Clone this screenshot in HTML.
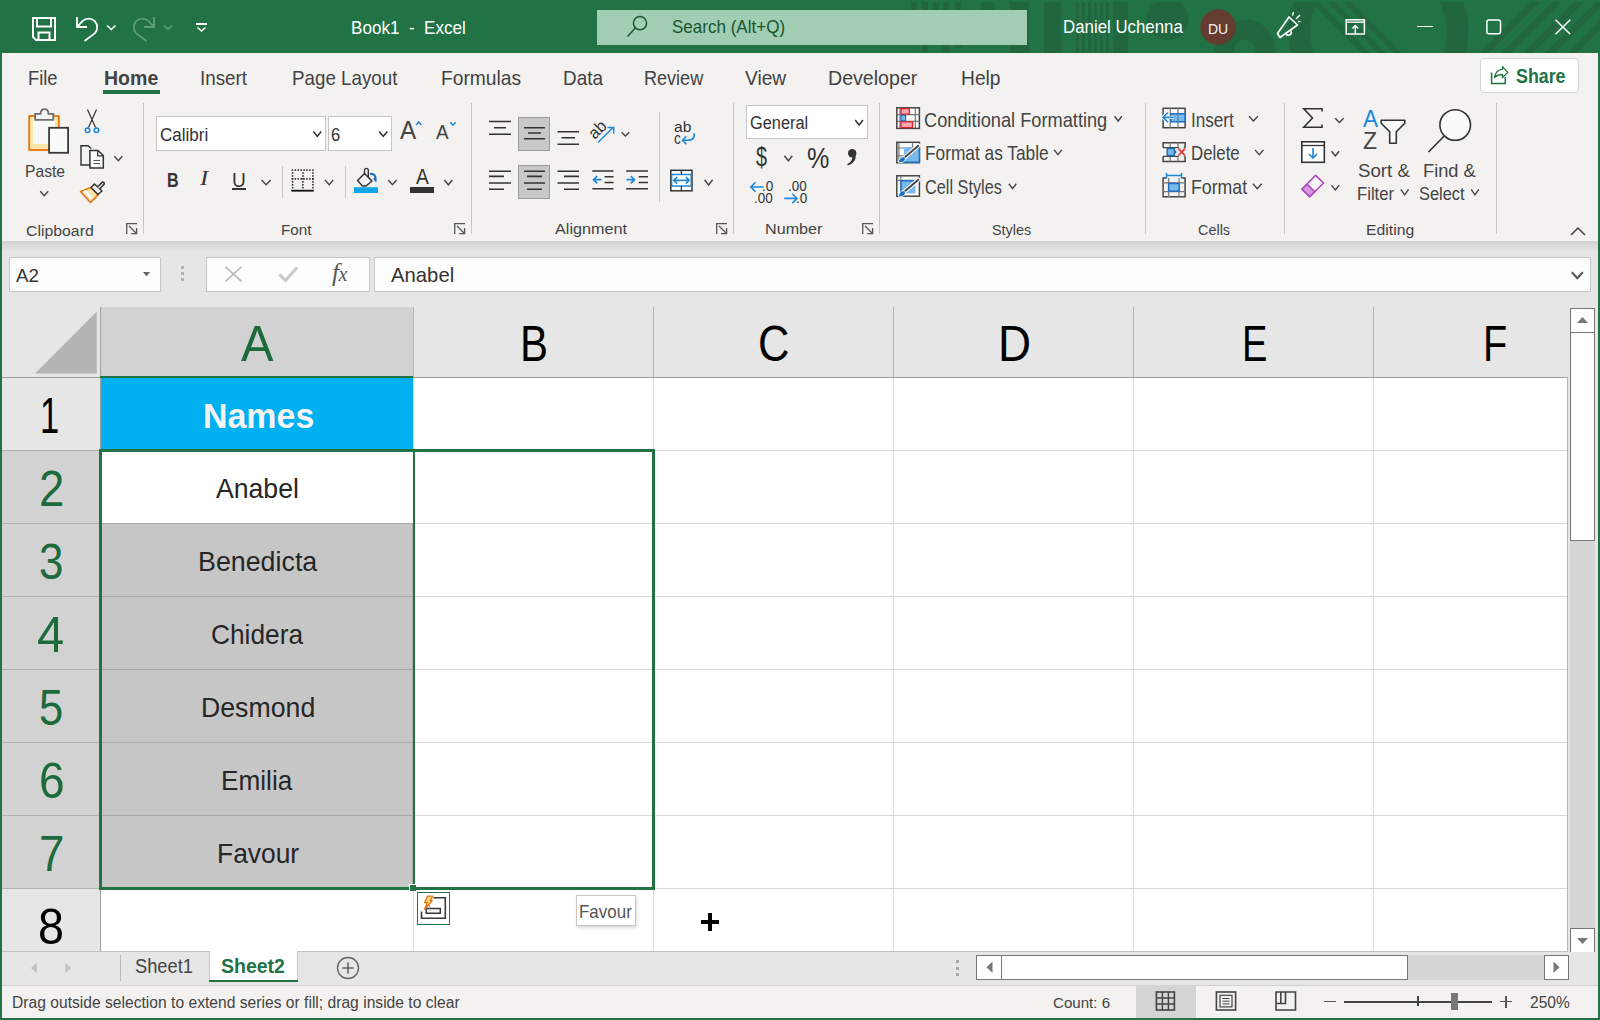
<!DOCTYPE html>
<html><head><meta charset="utf-8">
<style>
*{margin:0;padding:0;box-sizing:border-box}
html,body{width:1600px;height:1020px;overflow:hidden;background:#217346;font-family:"Liberation Sans",sans-serif;position:relative}
.a{position:absolute;overflow:visible}
.t{position:absolute;white-space:pre;line-height:1;transform-origin:0 0}
</style></head><body>
<div class="a" style="left:0px;top:0px;width:1600px;height:53px;background:#217346;"></div>
<div class="a" style="left:2px;top:53px;width:1596px;height:188px;background:#f3f2f1;"></div>
<div class="a" style="left:2px;top:241px;width:1596px;height:10px;background:linear-gradient(#d2d2d2,#e6e6e6);"></div>
<div class="a" style="left:2px;top:251px;width:1596px;height:56px;background:#e6e6e6;"></div>
<div class="a" style="left:2px;top:307px;width:1596px;height:644px;background:#e6e6e6;"></div>
<div class="a" style="left:2px;top:951px;width:1596px;height:34px;background:#e6e6e6;"></div>
<div class="a" style="left:2px;top:985px;width:1596px;height:33px;background:#f3f2f1;border-top:1px solid #d0d0d0"></div>
<svg class="a" style="left:0;top:0;overflow:hidden" width="1600" height="53"><rect x="911" y="2" width="6" height="8" fill="#22663f"/><rect x="922" y="2" width="6" height="50" fill="#22663f"/><rect x="933" y="2" width="6" height="8" fill="#22663f"/><rect x="943" y="2" width="6" height="50" fill="#22663f"/><rect x="955" y="2" width="6" height="46" fill="#22663f"/><rect x="981" y="2" width="13" height="8" fill="#22663f"/><rect x="1010" y="2" width="19" height="51" fill="#22663f"/><rect x="1044" y="2" width="17" height="51" fill="#22663f"/><rect x="1113" y="2" width="15" height="51" fill="#22663f"/><rect x="1076" y="2" width="3" height="51" fill="#22663f"/><rect x="1082" y="2" width="3" height="51" fill="#22663f"/><rect x="1088" y="2" width="3" height="51" fill="#22663f"/><rect x="1094" y="2" width="3" height="51" fill="#22663f"/><rect x="1100" y="2" width="3" height="51" fill="#22663f"/><rect x="1106" y="2" width="3" height="51" fill="#22663f"/><circle cx="1167.5" cy="19" r="21" fill="#22663f"/><circle cx="1245" cy="50" r="20.5" fill="none" stroke="#22663f" stroke-width="20"/><circle cx="1378.5" cy="32" r="79" fill="none" stroke="#22663f" stroke-width="22"/><path d="M1311 2 L1319 2 L1370 53 L1362 53 Z" fill="#22663f"/><path d="M1327 2 L1335 2 L1386 53 L1378 53 Z" fill="#22663f"/><path d="M1343 2 L1351 2 L1402 53 L1394 53 Z" fill="#22663f"/><path d="M1530 2 L1540 2 L1489 53 L1479 53 Z" fill="#22663f"/><path d="M1552 2 L1562 2 L1511 53 L1501 53 Z" fill="#22663f"/><path d="M1574 2 L1584 2 L1533 53 L1523 53 Z" fill="#22663f"/><path d="M1596 2 L1606 2 L1555 53 L1545 53 Z" fill="#22663f"/><path d="M1618 2 L1628 2 L1577 53 L1567 53 Z" fill="#22663f"/></svg>
<div class="a" style="left:0px;top:0px;width:1600px;height:2px;background:#217346;"></div>
<svg class="a" style="left:30px;top:15px;" width="30" height="30" viewBox="30 15 30 30"><path d="M33 18 H55 V40 H36 L33 37 Z M37 18 V26.5 H51 V18 M38.5 40 V32.5 H49.5 V40" fill="none" stroke="#fff" stroke-width="2"/></svg>
<svg class="a" style="left:72px;top:14px;" width="30" height="30" viewBox="72 14 30 30"><path d="M77 17 V27 H87" fill="none" stroke="#fff" stroke-width="1.8"/><path d="M77.8 26.2 L82.5 21.2 A8.6 8.6 0 0 1 94.7 33.4 L84.5 41" fill="none" stroke="#fff" stroke-width="1.8"/></svg>
<svg class="a" style="left:105px;top:23px;" width="13" height="9" viewBox="105 23 13 9"><path d="M107 25.5 L111.25 29.5 L115.5 25.5" fill="none" stroke="#fff" stroke-width="1.6"/></svg>
<svg class="a" style="left:128px;top:14px;" width="30" height="30" viewBox="128 14 30 30"><path d="M154 17 V27 H144" fill="none" stroke="#5f9e78" stroke-width="1.8"/><path d="M153.2 26.2 L148.5 21.2 A8.6 8.6 0 0 0 136.3 33.4 L146.5 41" fill="none" stroke="#5f9e78" stroke-width="1.8"/></svg>
<svg class="a" style="left:162px;top:23px;" width="13" height="9" viewBox="162 23 13 9"><path d="M164 25.5 L168.0 29.5 L172 25.5" fill="none" stroke="#5f9e78" stroke-width="1.5"/></svg>
<div class="a" style="left:196px;top:23px;width:11px;height:2px;background:#fff;"></div>
<svg class="a" style="left:195px;top:25px;" width="13" height="8" viewBox="195 25 13 8"><path d="M197.5 27.5 L201.5 31 L205.5 27.5" fill="none" stroke="#fff" stroke-width="1.6"/></svg>
<div class="t" style="left:351.00px;top:18.66px;font-size:18.72px;color:#fff;transform:scaleX(0.9134);">Book1  -  Excel</div>
<div class="a" style="left:597px;top:10px;width:430px;height:35px;background:#a0cdb4;"></div>
<svg class="a" style="left:622px;top:12px;" width="30" height="30" viewBox="622 12 30 30"><circle cx="640" cy="23.2" r="6.6" fill="none" stroke="#1a5a35" stroke-width="1.5"/><path d="M635.3 28 L627.5 36.5" stroke="#1a5a35" stroke-width="1.6"/></svg>
<div class="t" style="left:671.50px;top:19.47px;font-size:17.46px;color:#17562f;transform:scaleX(0.9763);">Search (Alt+Q)</div>
<div class="t" style="left:1063.00px;top:19.12px;font-size:17.88px;color:#fff;transform:scaleX(0.9430);">Daniel Uchenna</div>
<svg class="a" style="left:1198px;top:7px;" width="40" height="40" viewBox="1198 7 40 40"><circle cx="1218" cy="27" r="17.8" fill="#643c30"/></svg>
<div class="t" style="left:1207.75px;top:20.50px;font-size:15.36px;color:#f2f2f2;transform:scaleX(0.9101);">DU</div>
<svg class="a" style="left:1272px;top:12px;" width="32" height="32" viewBox="1272 12 32 32"><path d="M1277.5 33.5 L1289 17 L1297.5 25 L1280 37.5 Z" fill="none" stroke="#fff" stroke-width="1.7" stroke-linejoin="round"/><path d="M1285.5 33.5 A3 3 0 0 0 1291 31" fill="none" stroke="#fff" stroke-width="1.6"/><path d="M1292.5 15.5 L1293.5 12 M1296 19 L1300 15 M1298 21.5 L1300.5 21.5" stroke="#fff" stroke-width="1.5"/></svg>
<svg class="a" style="left:1340px;top:14px;" width="30" height="26" viewBox="1340 14 30 26"><rect x="1346.2" y="19.8" width="18.2" height="14.2" fill="none" stroke="#fff" stroke-width="1.5"/><path d="M1346 22.2 H1364.6" stroke="#fff" stroke-width="1.4"/><path d="M1355.3 34 V25.5 M1352.3 28.5 L1355.3 25.5 L1358.3 28.5" fill="none" stroke="#fff" stroke-width="1.5"/></svg>
<div class="a" style="left:1417px;top:25.5px;width:16px;height:1.6px;background:#fff;"></div>
<svg class="a" style="left:1482px;top:15px;" width="24" height="24" viewBox="1482 15 24 24"><rect x="1486.9" y="20" width="13.6" height="13.8" rx="2" fill="none" stroke="#fff" stroke-width="1.5"/></svg>
<svg class="a" style="left:1551px;top:15px;" width="24" height="24" viewBox="1551 15 24 24"><path d="M1555.5 19.8 L1570.3 34.2 M1570.3 19.8 L1555.5 34.2" stroke="#fff" stroke-width="1.5"/></svg>
<div class="t" style="left:27.50px;top:67.61px;font-size:20.25px;color:#424242;transform:scaleX(0.9042);">File</div>
<div class="t" style="left:200.00px;top:67.61px;font-size:20.25px;color:#424242;transform:scaleX(0.9284);">Insert</div>
<div class="t" style="left:292.00px;top:67.61px;font-size:20.25px;color:#424242;transform:scaleX(0.9275);">Page Layout</div>
<div class="t" style="left:441.25px;top:67.61px;font-size:20.25px;color:#424242;transform:scaleX(0.9481);">Formulas</div>
<div class="t" style="left:562.50px;top:67.61px;font-size:20.25px;color:#424242;transform:scaleX(0.9329);">Data</div>
<div class="t" style="left:643.75px;top:67.61px;font-size:20.25px;color:#424242;transform:scaleX(0.8910);">Review</div>
<div class="t" style="left:745.00px;top:67.61px;font-size:20.25px;color:#424242;transform:scaleX(0.9456);">View</div>
<div class="t" style="left:828.25px;top:67.61px;font-size:20.25px;color:#424242;transform:scaleX(0.9675);">Developer</div>
<div class="t" style="left:960.50px;top:67.61px;font-size:20.25px;color:#424242;transform:scaleX(0.9489);">Help</div>
<div class="t" style="left:103.75px;top:67.61px;font-size:20.25px;color:#424242;font-weight:bold;transform:scaleX(0.9644);">Home</div>
<div class="a" style="left:103px;top:90px;width:57px;height:4px;background:#217346;"></div>
<div class="a" style="left:1480px;top:57.5px;width:99px;height:35px;background:#fff;border:1px solid #d4d4d4;border-radius:4px"></div>
<svg class="a" style="left:1488px;top:62px;" width="24" height="26" viewBox="1488 62 24 26"><path d="M1491.6 72.5 V83.4 H1505.3 V77" fill="none" stroke="#217346" stroke-width="1.5"/><path d="M1494.4 77.6 C1495.5 72 1498 69.5 1502.5 69.3 V66.6 L1507.8 72.4 L1502.5 77.5 V74.5 C1499 74.5 1496.5 75.5 1494.4 77.6 Z" fill="none" stroke="#217346" stroke-width="1.3" stroke-linejoin="round"/></svg>
<div class="t" style="left:1515.50px;top:66.36px;font-size:20.25px;color:#217346;font-weight:bold;transform:scaleX(0.8800);">Share</div>
<div class="a" style="left:143px;top:103px;width:1px;height:131px;background:#c8c6c4;"></div>
<div class="a" style="left:471px;top:103px;width:1px;height:131px;background:#c8c6c4;"></div>
<div class="a" style="left:733px;top:103px;width:1px;height:131px;background:#c8c6c4;"></div>
<div class="a" style="left:879px;top:103px;width:1px;height:131px;background:#c8c6c4;"></div>
<div class="a" style="left:1145px;top:103px;width:1px;height:131px;background:#c8c6c4;"></div>
<div class="a" style="left:1284px;top:103px;width:1px;height:131px;background:#c8c6c4;"></div>
<div class="a" style="left:1496px;top:103px;width:1px;height:131px;background:#c8c6c4;"></div>
<div class="t" style="left:26.40px;top:222.73px;font-size:15.08px;color:#444;transform:scaleX(1.0490);">Clipboard</div>
<div class="t" style="left:280.70px;top:222.85px;font-size:14.94px;color:#444;transform:scaleX(1.0185);">Font</div>
<div class="t" style="left:554.50px;top:222.45px;font-size:14.94px;color:#444;transform:scaleX(1.0843);">Alignment</div>
<div class="t" style="left:765.30px;top:222.45px;font-size:14.94px;color:#444;transform:scaleX(1.0818);">Number</div>
<div class="t" style="left:992.30px;top:222.85px;font-size:14.94px;color:#444;transform:scaleX(0.9654);">Styles</div>
<div class="t" style="left:1198.40px;top:222.85px;font-size:14.94px;color:#444;transform:scaleX(0.9660);">Cells</div>
<div class="t" style="left:1366.00px;top:222.85px;font-size:14.94px;color:#444;transform:scaleX(1.0549);">Editing</div>
<svg class="a" style="left:125px;top:222px;" width="15" height="15" viewBox="125 222 15 15"><path d="M126.7 234 V223.7 H137" fill="none" stroke="#555" stroke-width="1.3"/><path d="M129 226 L136.5 233.5 M131 233.6 H136.6 V228" fill="none" stroke="#555" stroke-width="1.3"/></svg>
<svg class="a" style="left:453px;top:222px;" width="15" height="15" viewBox="453 222 15 15"><path d="M454.7 234 V223.7 H465" fill="none" stroke="#555" stroke-width="1.3"/><path d="M457 226 L464.5 233.5 M459 233.6 H464.6 V228" fill="none" stroke="#555" stroke-width="1.3"/></svg>
<svg class="a" style="left:715px;top:222px;" width="15" height="15" viewBox="715 222 15 15"><path d="M716.7 234 V223.7 H727" fill="none" stroke="#555" stroke-width="1.3"/><path d="M719 226 L726.5 233.5 M721 233.6 H726.6 V228" fill="none" stroke="#555" stroke-width="1.3"/></svg>
<svg class="a" style="left:861px;top:222px;" width="15" height="15" viewBox="861 222 15 15"><path d="M862.7 234 V223.7 H873" fill="none" stroke="#555" stroke-width="1.3"/><path d="M865 226 L872.5 233.5 M867 233.6 H872.6 V228" fill="none" stroke="#555" stroke-width="1.3"/></svg>
<svg class="a" style="left:1568px;top:224px;" width="20" height="14" viewBox="1568 224 20 14"><path d="M1571 235 L1578 228 L1585 235" fill="none" stroke="#444" stroke-width="1.5"/></svg>
<svg class="a" style="left:24px;top:105px;" width="50" height="52" viewBox="24 105 50 52"><rect x="29.2" y="116" width="29.6" height="34" fill="#fce6ac" stroke="#e47a12" stroke-width="1.9"/><rect x="33" y="119" width="22" height="25" fill="#f8f8f8"/><path d="M35.2 119.8 V113.8 H40.5 C41 107.6 48 107.6 48.5 113.8 H53.2 V119.8 Z" fill="#f4f4f4" stroke="#6e6e6e" stroke-width="1.8"/><rect x="49.1" y="127.8" width="19" height="25" fill="#fafafa" stroke="#3a3a3a" stroke-width="1.8"/></svg>
<div class="t" style="left:25.20px;top:162.64px;font-size:17.32px;color:#444;transform:scaleX(0.9042);">Paste</div>
<svg class="a" style="left:38px;top:189px;" width="13" height="9" viewBox="38 189 13 9"><path d="M40.2 191.2 L44.2 195.8 L48.2 191.2" fill="none" stroke="#444" stroke-width="1.4"/></svg>
<svg class="a" style="left:80px;top:106px;" width="24" height="30" viewBox="80 106 24 30"><path d="M88.5 127.5 L96.5 109.5 M95.5 127.5 L87.5 109.5" stroke="#333" stroke-width="1.2"/><circle cx="87.5" cy="130.3" r="2.3" fill="none" stroke="#1e87d6" stroke-width="1.5"/><circle cx="96.5" cy="130.3" r="2.3" fill="none" stroke="#1e87d6" stroke-width="1.5"/></svg>
<svg class="a" style="left:78px;top:143px;" width="30" height="30" viewBox="78 143 30 30"><path d="M90 165 H81 V145.8 H88 L91.2 148.5" fill="none" stroke="#333" stroke-width="1.4"/><path d="M89.9 168 V150.5 H98 L103.3 155.5 V168 Z" fill="#fafafa" stroke="#333" stroke-width="1.5"/><path d="M97.7 150.5 V155.8 H103" fill="none" stroke="#333" stroke-width="1.3"/><path d="M93.5 160.5 H100 M93.5 163.5 H100" stroke="#555" stroke-width="1"/></svg>
<svg class="a" style="left:112px;top:154px;" width="12" height="9" viewBox="112 154 12 9"><path d="M114.4 156.3 L118.35 160.8 L122.3 156.3" fill="none" stroke="#444" stroke-width="1.4"/></svg>
<svg class="a" style="left:78px;top:179px;" width="30" height="28" viewBox="78 179 30 28"><path d="M80.5 191.5 C85 190 88 188 91 187.5 L98 194.5 C96 197.5 93 200 90.5 202.5 Z" fill="#fde3a7" stroke="#e07612" stroke-width="1.6" stroke-linejoin="round"/><path d="M84 191 C88 194 91 197 91 199" fill="none" stroke="#f8f8f8" stroke-width="3"/><path d="M91 187.5 L94.5 184 L102 191 L98 194.5 Z" fill="#f0f0f0" stroke="#333" stroke-width="1.5" stroke-linejoin="round"/><path d="M97.5 187 L102.5 182 A1.6 1.6 0 0 1 104.2 184 L99.5 189" fill="#f0f0f0" stroke="#333" stroke-width="1.5"/></svg>
<div class="a" style="left:156px;top:116px;width:170px;height:35px;background:#fff;border:1px solid #c6c6c6"></div>
<div class="t" style="left:159.50px;top:125.69px;font-size:18.44px;color:#333;transform:scaleX(0.9228);">Calibri</div>
<svg class="a" style="left:311px;top:129px;" width="12" height="9" viewBox="311 129 12 9"><path d="M313.4 131.6 L317.29999999999995 136.3 L321.2 131.6" fill="none" stroke="#333" stroke-width="1.5"/></svg>
<div class="a" style="left:328px;top:116px;width:64px;height:35px;background:#fff;border:1px solid #c6c6c6"></div>
<div class="t" style="left:331.20px;top:125.69px;font-size:18.44px;color:#333;transform:scaleX(0.8976);">6</div>
<svg class="a" style="left:377px;top:129px;" width="13" height="9" viewBox="377 129 13 9"><path d="M379.2 131.6 L383.29999999999995 136.3 L387.4 131.6" fill="none" stroke="#333" stroke-width="1.5"/></svg>
<div class="t" style="left:399.70px;top:117.34px;font-size:26.54px;color:#444;transform:scaleX(0.9135);">A</div>
<svg class="a" style="left:414px;top:118px;" width="10" height="10" viewBox="414 118 10 10"><path d="M416.2 125 L418.8 122 L421.4 125" fill="none" stroke="#1e87d6" stroke-width="1.5"/></svg>
<div class="t" style="left:436.00px;top:122.89px;font-size:19.97px;color:#444;transform:scaleX(0.9495);">A</div>
<svg class="a" style="left:448px;top:118px;" width="10" height="10" viewBox="448 118 10 10"><path d="M450.3 122.2 L453 125.2 L455.7 122.2" fill="none" stroke="#1e87d6" stroke-width="1.5"/></svg>
<div class="t" style="left:166.60px;top:170.06px;font-size:20.25px;color:#333;font-weight:bold;transform:scaleX(0.7932);">B</div>
<div class="t" style="left:200px;top:168px;font-family:'Liberation Serif',serif;font-style:italic;font-size:21.5px;color:#333;transform:scaleX(1.15)">I</div>
<div class="t" style="left:232.00px;top:170.06px;font-size:20.25px;color:#333;transform:scaleX(0.9436);">U</div>
<div class="a" style="left:232px;top:188.2px;width:14px;height:1.8px;background:#333;"></div>
<svg class="a" style="left:259px;top:178px;" width="14" height="9" viewBox="259 178 14 9"><path d="M261.6 180 L266.1 184.8 L270.6 180" fill="none" stroke="#444" stroke-width="1.4"/></svg>
<div class="a" style="left:282px;top:166px;width:1px;height:32px;background:#c8c6c4;"></div>
<svg class="a" style="left:289px;top:166px;" width="28" height="28" viewBox="289 166 28 28"><rect x="291.60" y="169.3" width="1.6" height="1.6" fill="#333"/><rect x="291.60" y="178.1" width="1.6" height="1.6" fill="#333"/><rect x="294.53" y="169.3" width="1.6" height="1.6" fill="#333"/><rect x="294.53" y="178.1" width="1.6" height="1.6" fill="#333"/><rect x="297.46" y="169.3" width="1.6" height="1.6" fill="#333"/><rect x="297.46" y="178.1" width="1.6" height="1.6" fill="#333"/><rect x="300.39" y="169.3" width="1.6" height="1.6" fill="#333"/><rect x="300.39" y="178.1" width="1.6" height="1.6" fill="#333"/><rect x="303.32" y="169.3" width="1.6" height="1.6" fill="#333"/><rect x="303.32" y="178.1" width="1.6" height="1.6" fill="#333"/><rect x="306.25" y="169.3" width="1.6" height="1.6" fill="#333"/><rect x="306.25" y="178.1" width="1.6" height="1.6" fill="#333"/><rect x="309.18" y="169.3" width="1.6" height="1.6" fill="#333"/><rect x="309.18" y="178.1" width="1.6" height="1.6" fill="#333"/><rect x="312.11" y="169.3" width="1.6" height="1.6" fill="#333"/><rect x="312.11" y="178.1" width="1.6" height="1.6" fill="#333"/><rect x="291.8" y="172.23" width="1.6" height="1.6" fill="#333"/><rect x="312.1" y="172.23" width="1.6" height="1.6" fill="#333"/><rect x="302.1" y="172.23" width="1.6" height="1.6" fill="#333"/><rect x="291.8" y="175.16" width="1.6" height="1.6" fill="#333"/><rect x="312.1" y="175.16" width="1.6" height="1.6" fill="#333"/><rect x="302.1" y="175.16" width="1.6" height="1.6" fill="#333"/><rect x="291.8" y="178.09" width="1.6" height="1.6" fill="#333"/><rect x="312.1" y="178.09" width="1.6" height="1.6" fill="#333"/><rect x="302.1" y="178.09" width="1.6" height="1.6" fill="#333"/><rect x="291.8" y="181.02" width="1.6" height="1.6" fill="#333"/><rect x="312.1" y="181.02" width="1.6" height="1.6" fill="#333"/><rect x="302.1" y="181.02" width="1.6" height="1.6" fill="#333"/><rect x="291.8" y="183.95" width="1.6" height="1.6" fill="#333"/><rect x="312.1" y="183.95" width="1.6" height="1.6" fill="#333"/><rect x="302.1" y="183.95" width="1.6" height="1.6" fill="#333"/><rect x="291.8" y="186.88" width="1.6" height="1.6" fill="#333"/><rect x="312.1" y="186.88" width="1.6" height="1.6" fill="#333"/><rect x="302.1" y="186.88" width="1.6" height="1.6" fill="#333"/><rect x="312.3" y="178.1" width="1.6" height="1.6" fill="#333"/><rect x="291.3" y="189.8" width="22.5" height="1.8" fill="#111"/></svg>
<svg class="a" style="left:323px;top:178px;" width="13" height="9" viewBox="323 178 13 9"><path d="M325 180 L329.15 184.8 L333.3 180" fill="none" stroke="#444" stroke-width="1.4"/></svg>
<div class="a" style="left:345px;top:166px;width:1px;height:32px;background:#c8c6c4;"></div>
<svg class="a" style="left:352px;top:166px;" width="30" height="30" viewBox="352 166 30 30"><path d="M357.5 180.5 L364.5 173.5 L372 181 L366 186 H362.5 Z" fill="none" stroke="#333" stroke-width="1.5" stroke-linejoin="round"/><path d="M364.5 173.5 V169.8 A2 2 0 0 1 368.3 169.8 V177" fill="none" stroke="#333" stroke-width="1.4"/><path d="M370 174 C374 173 376 176 375.5 180 L374 178" fill="none" stroke="#1b6fc2" stroke-width="2.2"/><rect x="354" y="187.2" width="24" height="5.8" fill="#12a7e8"/></svg>
<svg class="a" style="left:386px;top:178px;" width="13" height="9" viewBox="386 178 13 9"><path d="M388.3 180 L392.45000000000005 184.8 L396.6 180" fill="none" stroke="#444" stroke-width="1.4"/></svg>
<div class="t" style="left:415.80px;top:167.41px;font-size:21.37px;color:#333;transform:scaleX(0.8982);">A</div>
<div class="a" style="left:410.3px;top:187.2px;width:23.6px;height:5.8px;background:#333;"></div>
<svg class="a" style="left:442px;top:178px;" width="12" height="9" viewBox="442 178 12 9"><path d="M444.4 180 L448.35 184.8 L452.3 180" fill="none" stroke="#444" stroke-width="1.4"/></svg>
<svg class="a" style="left:480px;top:110px;" width="180" height="95" viewBox="480 110 180 95"><rect x="518.5" y="117.5" width="31" height="33" fill="#c8c8c8" stroke="#9b9b9b" stroke-width="1"/><rect x="518.5" y="165.5" width="31" height="33" fill="#c8c8c8" stroke="#9b9b9b" stroke-width="1"/><path d="M489 121.5 H511 M494 127.8 H506 M489 134.3 H511 " stroke="#333" stroke-width="1.6" fill="none"/><path d="M524 127.8 H545 M528 133 H541 M524 138.8 H545 " stroke="#333" stroke-width="1.6" fill="none"/><path d="M557.5 131.8 H579.0 M561.5 137.8 H575.0 M557.5 144.2 H579.0 " stroke="#333" stroke-width="1.6" fill="none"/><path d="M489 171.2 H511 M489 176.4 H504 M489 183 H511 M489 189.3 H504 " stroke="#333" stroke-width="1.6" fill="none"/><path d="M524 171.2 H545 M527 176.4 H542 M524 183 H545 M527 189.3 H542 " stroke="#333" stroke-width="1.6" fill="none"/><path d="M557.5 171.2 H579.0 M564.0 176.4 H579.0 M557.5 183 H579.0 M564.0 189.3 H579.0 " stroke="#333" stroke-width="1.6" fill="none"/><path d="M592.3 171 H613.5 M604.5999999999999 176.8 H613.5 M604.5999999999999 182.5 H613.5 M592.3 188.8 H613.5 " stroke="#333" stroke-width="1.6" fill="none"/><path d="M601.5 179.7 H593.5 M597.2 176 L593.5 179.7 L597.2 183.4" fill="none" stroke="#1e87d6" stroke-width="1.7"/><path d="M626.2 171 H648.0 M638.7 176.8 H648.0 M638.7 182.5 H648.0 M626.2 188.8 H648.0 " stroke="#333" stroke-width="1.6" fill="none"/><path d="M626.5 179.7 H634.5 M630.8 176 L634.5 179.7 L630.8 183.4" fill="none" stroke="#1e87d6" stroke-width="1.7"/></svg>
<div class="t" style="left:589px;top:119.5px;font-size:16.5px;color:#333;transform:rotate(-45deg);transform-origin:10px 10px">ab</div>
<div class="a" style="left:659px;top:112px;width:1px;height:90px;background:#c8c6c4;"></div>
<svg class="a" style="left:588px;top:118px;" width="40" height="30" viewBox="588 118 40 30"><path d="M598 142.5 L613.5 127 M607.5 127.5 H613.7 V133.7" fill="none" stroke="#1e87d6" stroke-width="1.5"/></svg>
<svg class="a" style="left:619px;top:130px;" width="12" height="8" viewBox="619 130 12 8"><path d="M621.6 132.2 L625.4000000000001 136 L629.2 132.2" fill="none" stroke="#444" stroke-width="1.4"/></svg>
<div class="t" style="left:673.70px;top:120.60px;font-size:13.83px;color:#333;transform:scaleX(1.1279);">ab</div>
<div class="t" style="left:673.70px;top:130.10px;font-size:16.06px;color:#333;transform:scaleX(0.8500);">c</div>
<svg class="a" style="left:678px;top:128px;" width="20" height="20" viewBox="678 128 20 20"><path d="M693.8 133.2 C695.5 137.5 692 140.3 688 140.3 H682.5 M686.3 136.3 L682.5 140.3 L686.3 144.3" fill="none" stroke="#1e87d6" stroke-width="1.6"/></svg>
<svg class="a" style="left:668px;top:167px;" width="28" height="28" viewBox="668 167 28 28"><rect x="670.8" y="170.3" width="21.2" height="20.5" fill="#fff" stroke="#333" stroke-width="1.5"/><rect x="671.6" y="174.5" width="19.6" height="11.5" fill="#fff" stroke="#1e87d6" stroke-width="1.5"/><path d="M681.4 170.3 V174.5 M681.4 186 V190.8" stroke="#333" stroke-width="1.3"/><path d="M673.8 180.3 H689.2 M677.2 177 L673.8 180.3 L677.2 183.6 M685.8 177 L689.2 180.3 L685.8 183.6" fill="none" stroke="#1e87d6" stroke-width="1.7"/></svg>
<svg class="a" style="left:702px;top:177px;" width="13" height="10" viewBox="702 177 13 10"><path d="M704.6 179.8 L708.6 185 L712.6 179.8" fill="none" stroke="#444" stroke-width="1.4"/></svg>
<div class="a" style="left:746px;top:104.5px;width:122px;height:34.5px;background:#fff;border:1px solid #c6c6c6"></div>
<div class="t" style="left:749.50px;top:114.50px;font-size:17.60px;color:#333;transform:scaleX(0.9285);">General</div>
<svg class="a" style="left:853px;top:118px;" width="12" height="10" viewBox="853 118 12 10"><path d="M855.2 120 L859.1 125 L863 120" fill="none" stroke="#333" stroke-width="1.5"/></svg>
<div class="t" style="left:755.70px;top:143.45px;font-size:27.23px;color:#333;transform:scaleX(0.7273);">$</div>
<svg class="a" style="left:782px;top:153px;" width="12" height="10" viewBox="782 153 12 10"><path d="M784.4 155.8 L788.3499999999999 160.8 L792.3 155.8" fill="none" stroke="#444" stroke-width="1.4"/></svg>
<div class="t" style="left:806.90px;top:142.92px;font-size:29.75px;color:#333;transform:scaleX(0.8455);">%</div>
<svg class="a" style="left:844px;top:146px;" width="18" height="22" viewBox="844 146 18 22"><circle cx="852.2" cy="153.3" r="4.2" fill="#333"/><path d="M855.5 155 C856.5 160 853 164 847.8 165.5 L847.3 164 C850.5 162.5 852.5 160 852.5 156.5 Z" fill="#333"/></svg>
<div class="t" style="left:761.50px;top:179.88px;font-size:13.97px;color:#333;transform:scaleX(0.9720);">.0</div>
<div class="t" style="left:754.00px;top:192.08px;font-size:13.97px;color:#333;transform:scaleX(0.9641);">.00</div>
<svg class="a" style="left:748px;top:180px;" width="17" height="14" viewBox="748 180 17 14"><path d="M763.6 187 H751 M755.5 182.3 L750.8 187 L755.5 191.7" fill="none" stroke="#1e87d6" stroke-width="1.6"/></svg>
<div class="t" style="left:788.10px;top:179.88px;font-size:13.97px;color:#333;transform:scaleX(0.9641);">.00</div>
<div class="t" style="left:795.60px;top:192.08px;font-size:13.97px;color:#333;transform:scaleX(0.9720);">.0</div>
<svg class="a" style="left:782px;top:191px;" width="18" height="14" viewBox="782 191 18 14"><path d="M784.2 198.4 H796.8 M792.3 193.7 L797 198.4 L792.3 203.1" fill="none" stroke="#1e87d6" stroke-width="1.6"/></svg>
<svg class="a" style="left:894px;top:105px;" width="28" height="26" viewBox="894 105 28 26"><rect x="896.8" y="107.8" width="22.6" height="20.6" fill="#fafafa" stroke="#444" stroke-width="1.5"/><path d="M900 108 V128 M915.3 108 V128 M897 114.7 H919.5 M897 121.4 H919.5" stroke="#777" stroke-width="1.2"/><rect x="901" y="108.6" width="8.4" height="5.6" fill="#f7a9b0" stroke="#d9262c" stroke-width="1.3"/><rect x="901" y="115.2" width="4.6" height="5.6" fill="#7ab8ec" stroke="#1e6fc0" stroke-width="1.2"/><rect x="901" y="121.8" width="11.5" height="5.8" fill="#f7a9b0" stroke="#d9262c" stroke-width="1.3"/></svg>
<svg class="a" style="left:894px;top:139px;" width="28" height="28" viewBox="894 139 28 28"><rect x="896.8" y="142.3" width="22.6" height="20.4" fill="#fafafa" stroke="#444" stroke-width="1.5"/><path d="M898.9 142.5 V162.5 M912.5 142.5 V162.5 M897 148 H919.5 M897 155.9 H919.5" stroke="#777" stroke-width="1.2"/><rect x="904" y="147.3" width="15.4" height="15" fill="#7ab8ec"/><path d="M919.4 147.3 V162.3 H904" fill="none" stroke="#1e6fc0" stroke-width="1.5"/><path d="M904 158.0 L918.5 145.5" stroke="#fff" stroke-width="4.2" stroke-linecap="round"/><path d="M904.5 157.5 L918.3 145.7" stroke="#444" stroke-width="1.9" stroke-linecap="round"/><path d="M898 162.0 C899.5 158.5 901.5 156.0 904.5 157.0 C906 158.5 905.5 161.0 903 162.2 C901.5 162.7 899.5 162.5 898 162.0 Z" fill="#1e6fc0" stroke="#fff" stroke-width="0.9"/></svg>
<svg class="a" style="left:894px;top:173px;" width="28" height="28" viewBox="894 173 28 28"><rect x="896.8" y="175.8" width="22.6" height="20.4" fill="#fafafa" stroke="#444" stroke-width="1.5"/><path d="M897 180.4 H919.5 M900.8 176 V196" stroke="#777" stroke-width="1.2"/><rect x="901" y="180.8" width="14.5" height="12.5" fill="#7ab8ec"/><path d="M901 193.3 V180.8 H915.5" fill="none" stroke="#1e6fc0" stroke-width="1.5"/><path d="M904 192.0 L918.5 179.5" stroke="#fff" stroke-width="4.2" stroke-linecap="round"/><path d="M904.5 191.5 L918.3 179.7" stroke="#444" stroke-width="1.9" stroke-linecap="round"/><path d="M898 196.0 C899.5 192.5 901.5 190.0 904.5 191.0 C906 192.5 905.5 195.0 903 196.2 C901.5 196.7 899.5 196.5 898 196.0 Z" fill="#1e6fc0" stroke="#fff" stroke-width="0.9"/></svg>
<div class="t" style="left:924.10px;top:110.57px;font-size:19.41px;color:#444;transform:scaleX(0.9386);">Conditional Formatting</div>
<svg class="a" style="left:1112px;top:114px;" width="12" height="9" viewBox="1112 114 12 9"><path d="M1114.6 116.3 L1118.1999999999998 121 L1121.8 116.3" fill="none" stroke="#444" stroke-width="1.4"/></svg>
<div class="t" style="left:924.60px;top:144.17px;font-size:19.41px;color:#444;transform:scaleX(0.8910);">Format as Table</div>
<svg class="a" style="left:1052px;top:147px;" width="12" height="9" viewBox="1052 147 12 9"><path d="M1054.2 149.9 L1057.95 154.6 L1061.7 149.9" fill="none" stroke="#444" stroke-width="1.4"/></svg>
<div class="t" style="left:924.60px;top:178.27px;font-size:19.41px;color:#444;transform:scaleX(0.8383);">Cell Styles</div>
<svg class="a" style="left:1006px;top:181px;" width="12" height="9" viewBox="1006 181 12 9"><path d="M1008.8 183.8 L1012.55 188.6 L1016.3 183.8" fill="none" stroke="#444" stroke-width="1.4"/></svg>
<svg class="a" style="left:1158px;top:104px;" width="32" height="28" viewBox="1158 104 32 28"><rect x="1163.1" y="108.3" width="22" height="19.4" fill="#fafafa" stroke="#444" stroke-width="1.5"/><path d="M1170.2 108 V128 M1178 108 V128" stroke="#777" stroke-width="1.2"/><rect x="1170.8" y="113.8" width="14.2" height="8" fill="#7ab8ec" stroke="#1e6fc0" stroke-width="1.5"/><path d="M1178 114 V122" stroke="#4a7fb0" stroke-width="1.1"/><path d="M1173.5 117.4 H1163.5 M1168 112.5 L1163 117.4 L1168 122.3" fill="none" stroke="#fff" stroke-width="3.4"/><path d="M1173.5 117.4 H1163.5 M1168 112.5 L1163 117.4 L1168 122.3" fill="none" stroke="#1e87d6" stroke-width="1.6"/></svg>
<svg class="a" style="left:1158px;top:139px;" width="32" height="28" viewBox="1158 139 32 28"><path d="M1163.1 147.5 V142.7 H1185.1 V147.5 M1163.1 156.5 V161.4 H1185.1 V156.5" fill="none" stroke="#444" stroke-width="1.5"/><path d="M1170.2 142.5 V147.5 M1178 142.5 V147.5 M1170.2 156.5 V161.5 M1178 156.5 V161.5" stroke="#777" stroke-width="1.2"/><path d="M1163 147.6 H1185.5 M1163 156.4 H1185.5" stroke="#444" stroke-width="1.4"/><circle cx="1181.5" cy="152" r="5.3" fill="#ececec"/><rect x="1167.3" y="148.5" width="7" height="7" fill="#7ab8ec" stroke="#1e6fc0" stroke-width="1.5"/><path d="M1175 150 L1176.8 152 L1175 154 Z" fill="#1e6fc0"/><path d="M1178.3 148.6 L1185 155.5 M1185 148.6 L1178.3 155.5" stroke="#e8323c" stroke-width="1.7"/></svg>
<svg class="a" style="left:1158px;top:170px;" width="32" height="30" viewBox="1158 170 32 30"><path d="M1166.5 178 H1163.1 V196.8 H1185.1 V178 H1181.5" fill="none" stroke="#444" stroke-width="1.5"/><path d="M1168.7 178 V197 M1179 178 V197 M1163 182.8 H1185.5 M1163 191.7 H1185.5" stroke="#777" stroke-width="1.2"/><rect x="1168.6" y="183.5" width="10.6" height="7.6" fill="#7ab8ec" stroke="#1e6fc0" stroke-width="1.5"/><path d="M1166.5 175.5 H1181.5 M1166.5 172.8 V178.2 M1181.5 172.8 V178.2" stroke="#1e87d6" stroke-width="1.5"/></svg>
<div class="t" style="left:1191.00px;top:110.57px;font-size:19.41px;color:#444;transform:scaleX(0.8825);">Insert</div>
<svg class="a" style="left:1247px;top:114px;" width="13" height="9" viewBox="1247 114 13 9"><path d="M1249 116.3 L1253.4 121 L1257.8 116.3" fill="none" stroke="#444" stroke-width="1.4"/></svg>
<div class="t" style="left:1191.00px;top:144.17px;font-size:19.41px;color:#444;transform:scaleX(0.8679);">Delete</div>
<svg class="a" style="left:1253px;top:147px;" width="13" height="9" viewBox="1253 147 13 9"><path d="M1255 149.9 L1259.25 154.6 L1263.5 149.9" fill="none" stroke="#444" stroke-width="1.4"/></svg>
<div class="t" style="left:1191.00px;top:178.27px;font-size:19.41px;color:#444;transform:scaleX(0.9124);">Format</div>
<svg class="a" style="left:1250px;top:181px;" width="13" height="9" viewBox="1250 181 13 9"><path d="M1252.9 183.8 L1257.3000000000002 188.6 L1261.7 183.8" fill="none" stroke="#444" stroke-width="1.4"/></svg>
<svg class="a" style="left:1300px;top:105px;" width="26" height="26" viewBox="1300 105 26 26"><path d="M1322 111.5 V108.8 H1303.8 L1312.5 118 L1303.8 127.2 H1322 V124.5" fill="none" stroke="#333" stroke-width="1.6"/></svg>
<svg class="a" style="left:1333px;top:116px;" width="13" height="9" viewBox="1333 116 13 9"><path d="M1335.2 118.3 L1339.4 122.5 L1343.6 118.3" fill="none" stroke="#444" stroke-width="1.4"/></svg>
<svg class="a" style="left:1299px;top:139px;" width="28" height="26" viewBox="1299 139 28 26"><rect x="1301.8" y="141.8" width="22.5" height="20.5" fill="#fff" stroke="#333" stroke-width="1.6"/><path d="M1301.5 145.5 H1324.5" stroke="#333" stroke-width="1.3"/><path d="M1313 148 V158 M1309 154 L1313 158 L1317 154" fill="none" stroke="#1e87d6" stroke-width="1.6"/></svg>
<svg class="a" style="left:1329px;top:149px;" width="12" height="9" viewBox="1329 149 12 9"><path d="M1331.5 151.3 L1335.35 155.8 L1339.2 151.3" fill="none" stroke="#444" stroke-width="1.4"/></svg>
<svg class="a" style="left:1299px;top:172px;" width="28" height="28" viewBox="1299 172 28 28"><path d="M1302 189.2 L1315.6 175.3 L1323.6 183 L1309.7 196.8 Z" fill="#f7f7f7" stroke="#b146c2" stroke-width="1.6" stroke-linejoin="round"/><path d="M1302 189.2 L1307 184.1 L1314.8 191.8 L1309.7 196.8 Z" fill="#d597df" stroke="#b146c2" stroke-width="1.6" stroke-linejoin="round"/></svg>
<svg class="a" style="left:1329px;top:183px;" width="12" height="9" viewBox="1329 183 12 9"><path d="M1331.5 185.3 L1335.35 189.9 L1339.2 185.3" fill="none" stroke="#444" stroke-width="1.4"/></svg>
<div class="t" style="left:1362.50px;top:108.40px;font-size:23.74px;color:#1e87d6;transform:scaleX(0.9524);">A</div>
<div class="t" style="left:1362.50px;top:128.81px;font-size:24.44px;color:#444;transform:scaleX(0.9412);">Z</div>
<svg class="a" style="left:1378px;top:117px;" width="30" height="30" viewBox="1378 117 30 30"><path d="M1381.2 120.3 H1404.8 V123.2 L1396.3 131.8 V143.2 H1389.7 V131.8 L1381.2 123.2 Z" fill="#fafafa" stroke="#333" stroke-width="1.6" stroke-linejoin="round"/></svg>
<div class="t" style="left:1357.80px;top:162.16px;font-size:18.72px;color:#444;transform:scaleX(0.9971);">Sort &amp;</div>
<div class="t" style="left:1356.90px;top:185.26px;font-size:18.72px;color:#444;transform:scaleX(0.8906);">Filter</div>
<svg class="a" style="left:1398px;top:187px;" width="12" height="10" viewBox="1398 187 12 10"><path d="M1400.8 189.3 L1404.6999999999998 194.8 L1408.6 189.3" fill="none" stroke="#444" stroke-width="1.4"/></svg>
<svg class="a" style="left:1424px;top:105px;" width="52" height="52" viewBox="1424 105 52 52"><circle cx="1455.2" cy="125" r="15.3" fill="#fafafa" stroke="#333" stroke-width="1.6"/><path d="M1444.2 136 L1428.5 152" stroke="#333" stroke-width="1.7"/></svg>
<div class="t" style="left:1423.40px;top:162.16px;font-size:18.72px;color:#444;transform:scaleX(0.9763);">Find &amp;</div>
<div class="t" style="left:1418.75px;top:185.26px;font-size:18.72px;color:#444;transform:scaleX(0.8744);">Select</div>
<svg class="a" style="left:1469px;top:187px;" width="12" height="10" viewBox="1469 187 12 10"><path d="M1471.2 189.3 L1475.0 194.8 L1478.8 189.3" fill="none" stroke="#444" stroke-width="1.4"/></svg>
<div class="a" style="left:9px;top:257px;width:152px;height:35px;background:#fdfdfd;border:1px solid #c6c6c6"></div>
<div class="t" style="left:16.25px;top:266.14px;font-size:19.20px;color:#333;transform:scaleX(0.9733);">A2</div>
<svg class="a" style="left:140px;top:269px;" width="14" height="10" viewBox="140 269 14 10"><path d="M142.9 272 H150.1 L146.5 276.3 Z" fill="#666"/></svg>
<div class="a" style="left:181px;top:266.3px;width:3px;height:3.2px;background:#b0b0b0;"></div>
<div class="a" style="left:181px;top:272.2px;width:3px;height:3.2px;background:#b0b0b0;"></div>
<div class="a" style="left:181px;top:278.1px;width:3px;height:3.2px;background:#b0b0b0;"></div>
<div class="a" style="left:206px;top:257px;width:164px;height:35px;background:#fdfdfd;border:1px solid #c6c6c6"></div>
<svg class="a" style="left:222px;top:264px;" width="24" height="22" viewBox="222 264 24 22"><path d="M225.5 266.8 L241.5 281.3 M241.5 266.8 L225.5 281.3" stroke="#bdbdbd" stroke-width="1.8"/></svg>
<svg class="a" style="left:276px;top:264px;" width="24" height="22" viewBox="276 264 24 22"><path d="M279.5 274.5 L285.5 280.5 L297 267.5" fill="none" stroke="#c8c8c8" stroke-width="3"/></svg>
<div class="t" style="left:332px;top:260px;font-family:'Liberation Serif',serif;font-style:italic;font-size:25px;color:#555;letter-spacing:-0.5px">f<span style="font-size:20px">x</span></div>
<div class="a" style="left:374px;top:257px;width:1217px;height:35px;background:#fdfdfd;border:1px solid #c6c6c6"></div>
<div class="t" style="left:391.10px;top:265.36px;font-size:20.25px;color:#333;transform:scaleX(1.0000);">Anabel</div>
<svg class="a" style="left:1568px;top:268px;" width="18" height="14" viewBox="1568 268 18 14"><path d="M1571.8 272.3 L1577.3 278.3 L1582.8 272.3" fill="none" stroke="#555" stroke-width="2"/></svg>
<div class="a" style="left:2px;top:307px;width:1566px;height:644px;background:#fff;"></div>
<div class="a" style="left:2px;top:307px;width:1566px;height:70px;background:#e6e6e6;"></div>
<div class="a" style="left:100px;top:307px;width:313px;height:70px;background:#d2d2d2;"></div>
<div class="a" style="left:2px;top:377px;width:98px;height:574px;background:#e6e6e6;"></div>
<div class="a" style="left:2px;top:450px;width:98px;height:438px;background:#d2d2d2;"></div>
<svg class="a" style="left:30px;top:308px;" width="70" height="70" viewBox="30 308 70 70"><path d="M35 373.6 L96.8 311.6 V373.6 Z" fill="#b4b4b4"/></svg>
<div class="a" style="left:413px;top:377px;width:1px;height:574px;background:#d9d9d9;"></div>
<div class="a" style="left:653px;top:377px;width:1px;height:574px;background:#d9d9d9;"></div>
<div class="a" style="left:893px;top:377px;width:1px;height:574px;background:#d9d9d9;"></div>
<div class="a" style="left:1133px;top:377px;width:1px;height:574px;background:#d9d9d9;"></div>
<div class="a" style="left:1373px;top:377px;width:1px;height:574px;background:#d9d9d9;"></div>
<div class="a" style="left:100px;top:450px;width:1467px;height:1px;background:#d9d9d9;"></div>
<div class="a" style="left:100px;top:523px;width:1467px;height:1px;background:#d9d9d9;"></div>
<div class="a" style="left:100px;top:596px;width:1467px;height:1px;background:#d9d9d9;"></div>
<div class="a" style="left:100px;top:669px;width:1467px;height:1px;background:#d9d9d9;"></div>
<div class="a" style="left:100px;top:742px;width:1467px;height:1px;background:#d9d9d9;"></div>
<div class="a" style="left:100px;top:815px;width:1467px;height:1px;background:#d9d9d9;"></div>
<div class="a" style="left:100px;top:888px;width:1467px;height:1px;background:#d9d9d9;"></div>
<div class="a" style="left:100px;top:377px;width:313px;height:73px;background:#00b0f0;"></div>
<div class="a" style="left:101px;top:524px;width:312px;height:364px;background:#c6c6c6;"></div>
<div class="a" style="left:101px;top:523px;width:312px;height:1px;background:#a8a8a8;"></div>
<div class="a" style="left:101px;top:596px;width:312px;height:1px;background:#a8a8a8;"></div>
<div class="a" style="left:101px;top:669px;width:312px;height:1px;background:#a8a8a8;"></div>
<div class="a" style="left:101px;top:742px;width:312px;height:1px;background:#a8a8a8;"></div>
<div class="a" style="left:101px;top:815px;width:312px;height:1px;background:#a8a8a8;"></div>
<div class="a" style="left:412px;top:524px;width:1px;height:364px;background:#a8a8a8;"></div>
<div class="a" style="left:413px;top:307px;width:1px;height:70px;background:#b5b5b5;"></div>
<div class="a" style="left:653px;top:307px;width:1px;height:70px;background:#b5b5b5;"></div>
<div class="a" style="left:893px;top:307px;width:1px;height:70px;background:#b5b5b5;"></div>
<div class="a" style="left:1133px;top:307px;width:1px;height:70px;background:#b5b5b5;"></div>
<div class="a" style="left:1373px;top:307px;width:1px;height:70px;background:#b5b5b5;"></div>
<div class="a" style="left:100px;top:307px;width:1px;height:644px;background:#9e9e9e;"></div>
<div class="a" style="left:2px;top:377px;width:1566px;height:1px;background:#9e9e9e;"></div>
<div class="a" style="left:2px;top:450px;width:98px;height:1px;background:#b0b0b0;"></div>
<div class="a" style="left:2px;top:523px;width:98px;height:1px;background:#b0b0b0;"></div>
<div class="a" style="left:2px;top:596px;width:98px;height:1px;background:#b0b0b0;"></div>
<div class="a" style="left:2px;top:669px;width:98px;height:1px;background:#b0b0b0;"></div>
<div class="a" style="left:2px;top:742px;width:98px;height:1px;background:#b0b0b0;"></div>
<div class="a" style="left:2px;top:815px;width:98px;height:1px;background:#b0b0b0;"></div>
<div class="a" style="left:2px;top:888px;width:98px;height:1px;background:#b0b0b0;"></div>
<div class="a" style="left:100px;top:376px;width:313px;height:2px;background:#217346;"></div>
<div class="a" style="left:1567px;top:377px;width:1px;height:575px;background:#b6b6b6;"></div>
<div class="a" style="left:2px;top:951px;width:1566px;height:1px;background:#c0c0c0;"></div>
<div class="t" style="left:240.81px;top:318.84px;font-size:50.28px;color:#1d6b3c;transform:scaleX(0.9697);">A</div>
<div class="t" style="left:520.20px;top:318.84px;font-size:50.28px;color:#000;transform:scaleX(0.8358);">B</div>
<div class="t" style="left:757.60px;top:318.84px;font-size:50.28px;color:#000;transform:scaleX(0.8662);">C</div>
<div class="t" style="left:998.21px;top:318.84px;font-size:50.28px;color:#000;transform:scaleX(0.9097);">D</div>
<div class="t" style="left:1241.74px;top:318.84px;font-size:50.28px;color:#000;transform:scaleX(0.7590);">E</div>
<div class="t" style="left:1482.75px;top:318.84px;font-size:50.28px;color:#000;transform:scaleX(0.7902);">F</div>
<div class="t" style="left:39.89px;top:390.94px;font-size:50.28px;color:#000;transform:scaleX(0.6866);">1</div>
<div class="t" style="left:38.81px;top:463.94px;font-size:50.28px;color:#1d6b3c;transform:scaleX(0.9063);">2</div>
<div class="t" style="left:39.06px;top:536.94px;font-size:50.28px;color:#1d6b3c;transform:scaleX(0.8742);">3</div>
<div class="t" style="left:37.03px;top:609.94px;font-size:50.28px;color:#1d6b3c;transform:scaleX(0.9728);">4</div>
<div class="t" style="left:39.38px;top:682.94px;font-size:50.28px;color:#1d6b3c;transform:scaleX(0.8660);">5</div>
<div class="t" style="left:38.72px;top:755.94px;font-size:50.28px;color:#1d6b3c;transform:scaleX(0.9161);">6</div>
<div class="t" style="left:38.66px;top:828.94px;font-size:50.28px;color:#1d6b3c;transform:scaleX(0.9103);">7</div>
<div class="t" style="left:37.88px;top:901.94px;font-size:50.28px;color:#000;transform:scaleX(0.9297);">8</div>
<div class="t" style="left:202.75px;top:398.84px;font-size:34.92px;color:#f4f4f4;font-weight:bold;transform:scaleX(0.9718);">Names</div>
<div class="t" style="left:215.50px;top:475.31px;font-size:27.51px;color:#262626;transform:scaleX(0.9682);">Anabel</div>
<div class="t" style="left:197.60px;top:548.41px;font-size:27.51px;color:#262626;transform:scaleX(0.9749);">Benedicta</div>
<div class="t" style="left:211.00px;top:620.91px;font-size:27.51px;color:#262626;transform:scaleX(0.9556);">Chidera</div>
<div class="t" style="left:200.60px;top:693.51px;font-size:27.51px;color:#262626;transform:scaleX(0.9707);">Desmond</div>
<div class="t" style="left:221.40px;top:767.41px;font-size:27.51px;color:#262626;transform:scaleX(0.9520);">Emilia</div>
<div class="t" style="left:217.00px;top:840.01px;font-size:27.51px;color:#262626;transform:scaleX(0.9600);">Favour</div>
<div class="a" style="left:99px;top:449px;width:556px;height:3px;background:#217346;"></div>
<div class="a" style="left:99px;top:449px;width:3px;height:441px;background:#217346;"></div>
<div class="a" style="left:652px;top:449px;width:3px;height:441px;background:#217346;"></div>
<div class="a" style="left:99px;top:887px;width:556px;height:3px;background:#217346;"></div>
<div class="a" style="left:413px;top:452px;width:2px;height:435px;background:#217346;"></div>
<div class="a" style="left:409px;top:884px;width:7px;height:7px;background:#fff;"></div>
<div class="a" style="left:410px;top:885px;width:6px;height:6px;background:#217346;"></div>
<div class="a" style="left:413px;top:887px;width:3px;height:3px;background:#217346;"></div>
<svg class="a" style="left:416px;top:891px;" width="36" height="36" viewBox="416 891 36 36"><rect x="417.5" y="892.5" width="32" height="32" fill="#fff" stroke="#217346" stroke-width="1"/><path d="M421.5 911.5 V918.3 H445.3 V897.8 H433.5" fill="none" stroke="#3a3a3a" stroke-width="1.6"/><path d="M426.2 913.2 V908.6 H440.3 V913.2 Z" fill="#f5f5f5" stroke="#3a3a3a" stroke-width="1.5"/><path d="M429.5 908.5 V905 L428.5 905.8" fill="none" stroke="#9a9a9a" stroke-width="1"/><path d="M427.5 896.2 H432.8 L430.3 900.6 H432.3 L424.6 909.2 L427.2 902.6 H424.6 Z" fill="#fbd77a" stroke="#e8740c" stroke-width="1.3" stroke-linejoin="round"/></svg>
<div class="a" style="left:576px;top:895px;width:60px;height:31px;background:#fff;border:1px solid #c8c8c8;box-shadow:1px 2px 3px rgba(0,0,0,0.15)"></div>
<div class="t" style="left:579.30px;top:903.13px;font-size:18.16px;color:#555;transform:scaleX(0.9348);">Favour</div>
<div class="a" style="left:701px;top:920px;width:18px;height:4px;background:#000;"></div>
<div class="a" style="left:708px;top:913px;width:4px;height:18px;background:#000;"></div>
<div class="a" style="left:1568px;top:307px;width:30px;height:644px;background:#e6e6e6;"></div>
<div class="a" style="left:1570px;top:333px;width:25px;height:595px;background:#d6d6d6;"></div>
<div class="a" style="left:1570px;top:308px;width:25px;height:25px;background:#fff;border:1px solid #777"></div>
<svg class="a" style="left:1574px;top:314px;" width="18" height="12" viewBox="1574 314 18 12"><path d="M1577 323 L1582.5 317 L1588 323 Z" fill="#777"/></svg>
<div class="a" style="left:1570px;top:332px;width:25px;height:209px;background:#fff;border:1px solid #777"></div>
<div class="a" style="left:1570px;top:928px;width:25px;height:25px;background:#fff;border:1px solid #777"></div>
<svg class="a" style="left:1574px;top:935px;" width="18" height="12" viewBox="1574 935 18 12"><path d="M1577 938 H1588 L1582.5 944 Z" fill="#777"/></svg>
<div class="a" style="left:2px;top:952px;width:1596px;height:33px;background:#e6e6e6;"></div>
<svg class="a" style="left:26px;top:958px;" width="52" height="20" viewBox="26 958 52 20"><path d="M36.8 962.8 L30.9 967.9 L36.8 973 Z" fill="#c2c2c2"/><path d="M65.3 962.8 L71.2 967.9 L65.3 973 Z" fill="#c2c2c2"/></svg>
<div class="a" style="left:120px;top:955px;width:1px;height:26px;background:#b8b8b8;"></div>
<div class="a" style="left:209px;top:952px;width:1px;height:30px;background:#c6c6c6;"></div>
<div class="t" style="left:134.70px;top:956.71px;font-size:19.83px;color:#444;transform:scaleX(0.9214);">Sheet1</div>
<div class="a" style="left:209px;top:951px;width:89px;height:31px;background:#fff;border-left:1px solid #c6c6c6;border-right:1px solid #c6c6c6"></div>
<div class="a" style="left:209px;top:980px;width:89px;height:2px;background:#217346;"></div>
<div class="t" style="left:221.40px;top:956.71px;font-size:19.83px;color:#217346;font-weight:bold;transform:scaleX(0.9822);">Sheet2</div>
<svg class="a" style="left:334px;top:955px;" width="28" height="28" viewBox="334 955 28 28"><circle cx="348" cy="968" r="10.5" fill="none" stroke="#666" stroke-width="1.4"/><path d="M348 962.5 V973.5 M342.5 968 H353.5" stroke="#666" stroke-width="1.6"/></svg>
<div class="a" style="left:956px;top:960px;width:3px;height:3px;background:#a8a8a8;"></div>
<div class="a" style="left:956px;top:966.5px;width:3px;height:3px;background:#a8a8a8;"></div>
<div class="a" style="left:956px;top:973px;width:3px;height:3px;background:#a8a8a8;"></div>
<div class="a" style="left:976px;top:955px;width:593px;height:25px;background:#d6d6d6;"></div>
<div class="a" style="left:976px;top:955px;width:26px;height:25px;background:#fff;border:1px solid #777"></div>
<svg class="a" style="left:980px;top:958px;" width="18" height="18" viewBox="980 958 18 18"><path d="M992.5 961.5 L986.5 967.3 L992.5 973.1 Z" fill="#777"/></svg>
<div class="a" style="left:1001px;top:955px;width:407px;height:25px;background:#fff;border:1px solid #777"></div>
<div class="a" style="left:1544px;top:955px;width:25px;height:25px;background:#fff;border:1px solid #777"></div>
<svg class="a" style="left:1548px;top:958px;" width="18" height="18" viewBox="1548 958 18 18"><path d="M1553.5 961.5 L1559.5 967.3 L1553.5 973.1 Z" fill="#777"/></svg>
<div class="t" style="left:12.40px;top:995.26px;font-size:15.64px;color:#444;transform:scaleX(1.0008);">Drag outside selection to extend series or fill; drag inside to clear</div>
<div class="t" style="left:1052.50px;top:995.65px;font-size:14.94px;color:#444;transform:scaleX(1.0098);">Count: 6</div>
<div class="a" style="left:1136px;top:985px;width:60px;height:33px;background:#d4d4d4;"></div>
<svg class="a" style="left:1152px;top:988px;" width="28" height="26" viewBox="1152 988 28 26"><rect x="1156.4" y="992" width="18" height="18" fill="none" stroke="#444" stroke-width="1.6"/><path d="M1162.4 992 V1010 M1168.4 992 V1010 M1156.4 998 H1174.4 M1156.4 1004 H1174.4" stroke="#444" stroke-width="1.4"/></svg>
<svg class="a" style="left:1212px;top:988px;" width="28" height="26" viewBox="1212 988 28 26"><rect x="1216.4" y="992" width="19.2" height="18" fill="none" stroke="#444" stroke-width="1.6"/><rect x="1220" y="995.3" width="12" height="11.6" fill="none" stroke="#444" stroke-width="1.2"/><path d="M1222.5 998.5 H1229.5 M1222.5 1001.2 H1229.5 M1222.5 1003.9 H1229.5" stroke="#444" stroke-width="1"/></svg>
<svg class="a" style="left:1272px;top:988px;" width="28" height="26" viewBox="1272 988 28 26"><path d="M1276 992 H1295.5 V1010 H1276 Z M1276 1003.5 H1285.5 V992 M1280.8 992 V1003.5" fill="none" stroke="#444" stroke-width="1.6"/></svg>
<div class="a" style="left:1324px;top:1001px;width:12px;height:1.4px;background:#555;"></div>
<div class="a" style="left:1344px;top:1000.8px;width:148px;height:1.8px;background:#444;"></div>
<div class="a" style="left:1417px;top:996px;width:1.8px;height:10px;background:#444;"></div>
<div class="a" style="left:1450.5px;top:993px;width:7.5px;height:17px;background:#777;"></div>
<div class="a" style="left:1500px;top:1000.8px;width:12px;height:1.4px;background:#555;"></div>
<div class="a" style="left:1505.2px;top:995.5px;width:1.4px;height:12px;background:#555;"></div>
<div class="t" style="left:1530.30px;top:995.26px;font-size:15.64px;color:#444;transform:scaleX(0.9943);">250%</div>
</body></html>
